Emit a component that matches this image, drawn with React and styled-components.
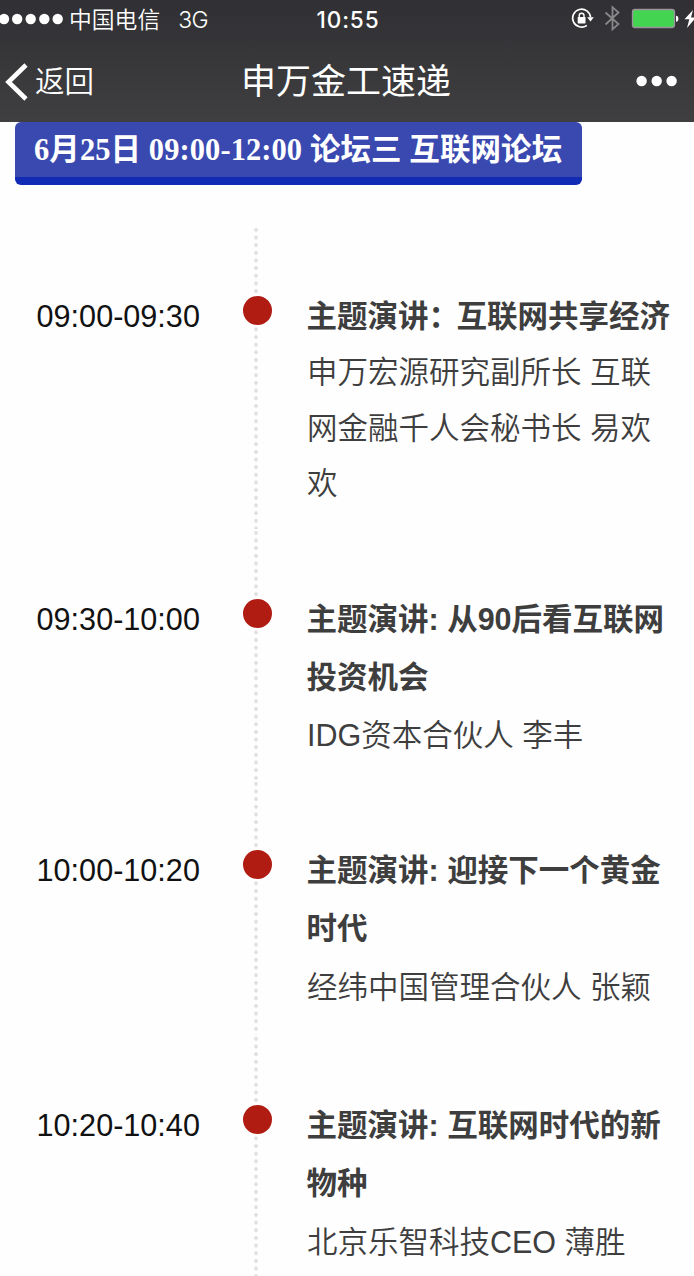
import React from "react";
import styled, { createGlobalStyle } from "styled-components";

const GlobalStyle = createGlobalStyle`
  * { box-sizing: border-box; }
  html, body { margin: 0; padding: 0; background: #fefefe; }
  body { font-family: "Liberation Sans", "Noto Sans CJK SC", sans-serif; }
`;

const Screen = styled.div`
  width: 694px;
  height: 1276px;
  overflow: hidden;
  background: #fefefe;
`;

const Header = styled.header`
  height: 122px;
  color: #fff;
  background: linear-gradient(#303034, #3f3e40);
`;

const StatusBar = styled.div`
  height: 40px;
  display: grid;
  grid-template-columns: 1fr auto 1fr;
  align-items: center;
  line-height: 40px;
`;

const Carrier = styled.div`
  display: flex;
  align-items: center;
  font-size: 22.8px;
  font-weight: 350;
`;

const Signal = styled.svg`
  width: 64px;
  height: 12px;
  margin: -3px 5px 0 0;
  fill: #fff;
`;

const Network = styled.span`
  margin-left: 18px;
  font-family: Inter, sans-serif;
  font-size: 23px;
  letter-spacing: -0.6px;
`;

const Clock = styled.div`
  font-family: Inter, sans-serif;
  font-size: 22.5px;
  font-weight: 500;
  letter-spacing: 0.9px;
  padding-left: 2px;
`;

const StatusIcons = styled.svg`
  justify-self: end;
  width: 130px;
  height: 40px;
`;

const NavBar = styled.nav`
  height: 82px;
  display: grid;
  grid-template-columns: 1fr auto 1fr;
  align-items: center;
`;

const Back = styled.div`
  display: flex;
  align-items: center;
  gap: 6px;
  padding-left: 5px;
  font-size: 29.5px;
  font-weight: 350;
  line-height: 84px;
`;

const Chevron = styled.svg`
  width: 24px;
  height: 38px;
  fill: none;
  stroke: #fff;
  stroke-width: 4.6;
`;

const Title = styled.h1`
  margin: 0 2px 0 0;
  font-size: 35px;
  font-weight: 400;
  line-height: 82px;
`;

const More = styled.svg`
  justify-self: end;
  width: 41px;
  height: 12px;
  margin-right: 17px;
  margin-top: -2px;
  fill: #fff;
`;

const Banner = styled.h2`
  width: 567px;
  height: 63px;
  margin: 0 0 41px 15px;
  padding-left: 19px;
  border-bottom: 8px solid #112bb5;
  border-radius: 6px;
  background: #3949b0;
  color: #fff;
  font-family: "Liberation Serif", "Noto Sans CJK SC", serif;
  font-size: 30.5px;
  font-weight: 700;
  letter-spacing: 0.08px;
  line-height: 56px;
  white-space: nowrap;
`;

const Timeline = styled.main`
  height: 1050px;
`;

const Row = styled.section`
  display: grid;
  grid-template-columns: 243px 64px 1fr;
  align-items: start;
  height: ${(p) => p.$height}px;
  padding-top: 61px;
  background: radial-gradient(circle, #dededf 1.2px, transparent 2.5px) 252.3px 0 / 8px 7.67px repeat-y;
`;

const Time = styled.time`
  padding-left: 36.6px;
  color: #111;
  font-size: 30.6px;
  line-height: 58px;
  white-space: nowrap;
`;

const Marker = styled.span`
  width: 29px;
  height: 29px;
  margin-top: 9px;
  border-radius: 50%;
  background: #b01b12;
`;

const Talk = styled.div`
  color: #3e3e3e;
  font-size: 30.5px;
  white-space: nowrap;
`;

const Topic = styled.h3`
  margin: 0 0 0 -0.5px;
  font-size: inherit;
  font-weight: 700;
  line-height: 58px;
`;

const WideColon = styled.span`
  letter-spacing: -2.5px;
`;

const Speaker = styled.p`
  margin: ${(p) => p.$offset}px 0 0;
  font-weight: 350;
  line-height: 55.5px;
`;

const Line = styled.span`
  display: block;
`;

const sessions = [
  {
    time: "09:00-09:30",
    height: 303,
    offset: 0,
    topic: [
      <>
        主题演讲<WideColon>：</WideColon>互联网共享经济
      </>,
    ],
    speaker: ["申万宏源研究副所长 互联", "网金融千人会秘书长 易欢", "欢"],
  },
  {
    time: "09:30-10:00",
    height: 251,
    offset: 1.5,
    topic: ["主题演讲: 从90后看互联网", "投资机会"],
    speaker: ["IDG资本合伙人 李丰"],
  },
  {
    time: "10:00-10:20",
    height: 255,
    offset: 2.5,
    topic: ["主题演讲: 迎接下一个黄金", "时代"],
    speaker: ["经纬中国管理合伙人 张颖"],
  },
  {
    time: "10:20-10:40",
    height: 241,
    offset: 3,
    topic: ["主题演讲: 互联网时代的新", "物种"],
    speaker: ["北京乐智科技CEO 薄胜"],
  },
];

export default function App() {
  return (
    <Screen>
      <GlobalStyle />
      <Header>
        <StatusBar>
          <Carrier>
            <Signal viewBox="0 0 64 12">
              {[4, 17.2, 30.7, 44.3, 57.7].map((x) => (
                <circle key={x} cx={x} cy="6" r="5.2" />
              ))}
            </Signal>
            中国电信
            <Network>3G</Network>
          </Carrier>
          <Clock>10:55</Clock>
          <StatusIcons viewBox="564 0 130 40">
            <path d="M586.9 25.4A9 9 0 1 1 590.6 17.5" fill="none" stroke="#fff" strokeWidth="1.6" />
            <path d="M587.2 17.3h6.6l-3.3 4.2z" fill="#fff" />
            <rect x="577.7" y="17" width="7.8" height="6.4" rx="0.6" fill="#fff" />
            <path d="M579.2 17.6v-2a2.4 2.4 0 0 1 4.8 0v2" fill="none" stroke="#fff" strokeWidth="1.4" />
            <path d="M605.5 12.5L618.5 24L612.5 29.3V7.2L618.5 12.5L605.5 24.5" fill="none" stroke="#88888b" strokeWidth="1.8" />
            <rect x="632.5" y="9.5" width="42" height="18" rx="2.5" fill="#43d551" stroke="#9b929d" strokeWidth="1.3" />
            <path d="M676 15.8q2.4 0 2.4 3t-2.4 3z" fill="#fff" />
            <path d="M693 10l-8.5 9.3h4.8l-2.3 8.7 9-10.5h-5z" fill="#fff" />
          </StatusIcons>
        </StatusBar>
        <NavBar>
          <Back>
            <Chevron viewBox="0 0 24 38">
              <path d="M21 2L3.5 19L21 36" />
            </Chevron>
            返回
          </Back>
          <Title>申万金工速递</Title>
          <More viewBox="0 0 41 12">
            <circle cx="5.6" cy="6" r="5.2" />
            <circle cx="20.7" cy="6" r="5.2" />
            <circle cx="35.6" cy="6" r="5.2" />
          </More>
        </NavBar>
      </Header>
      <Banner>6月25日 09:00-12:00 论坛三 互联网论坛</Banner>
      <Timeline>
        {sessions.map((s) => (
          <Row key={s.time} $height={s.height}>
            <Time>{s.time}</Time>
            <Marker />
            <Talk>
              <Topic>
                {s.topic.map((t, i) => (
                  <Line key={i}>{t}</Line>
                ))}
              </Topic>
              <Speaker $offset={s.offset}>
                {s.speaker.map((t, i) => (
                  <Line key={i}>{t}</Line>
                ))}
              </Speaker>
            </Talk>
          </Row>
        ))}
      </Timeline>
    </Screen>
  );
}
